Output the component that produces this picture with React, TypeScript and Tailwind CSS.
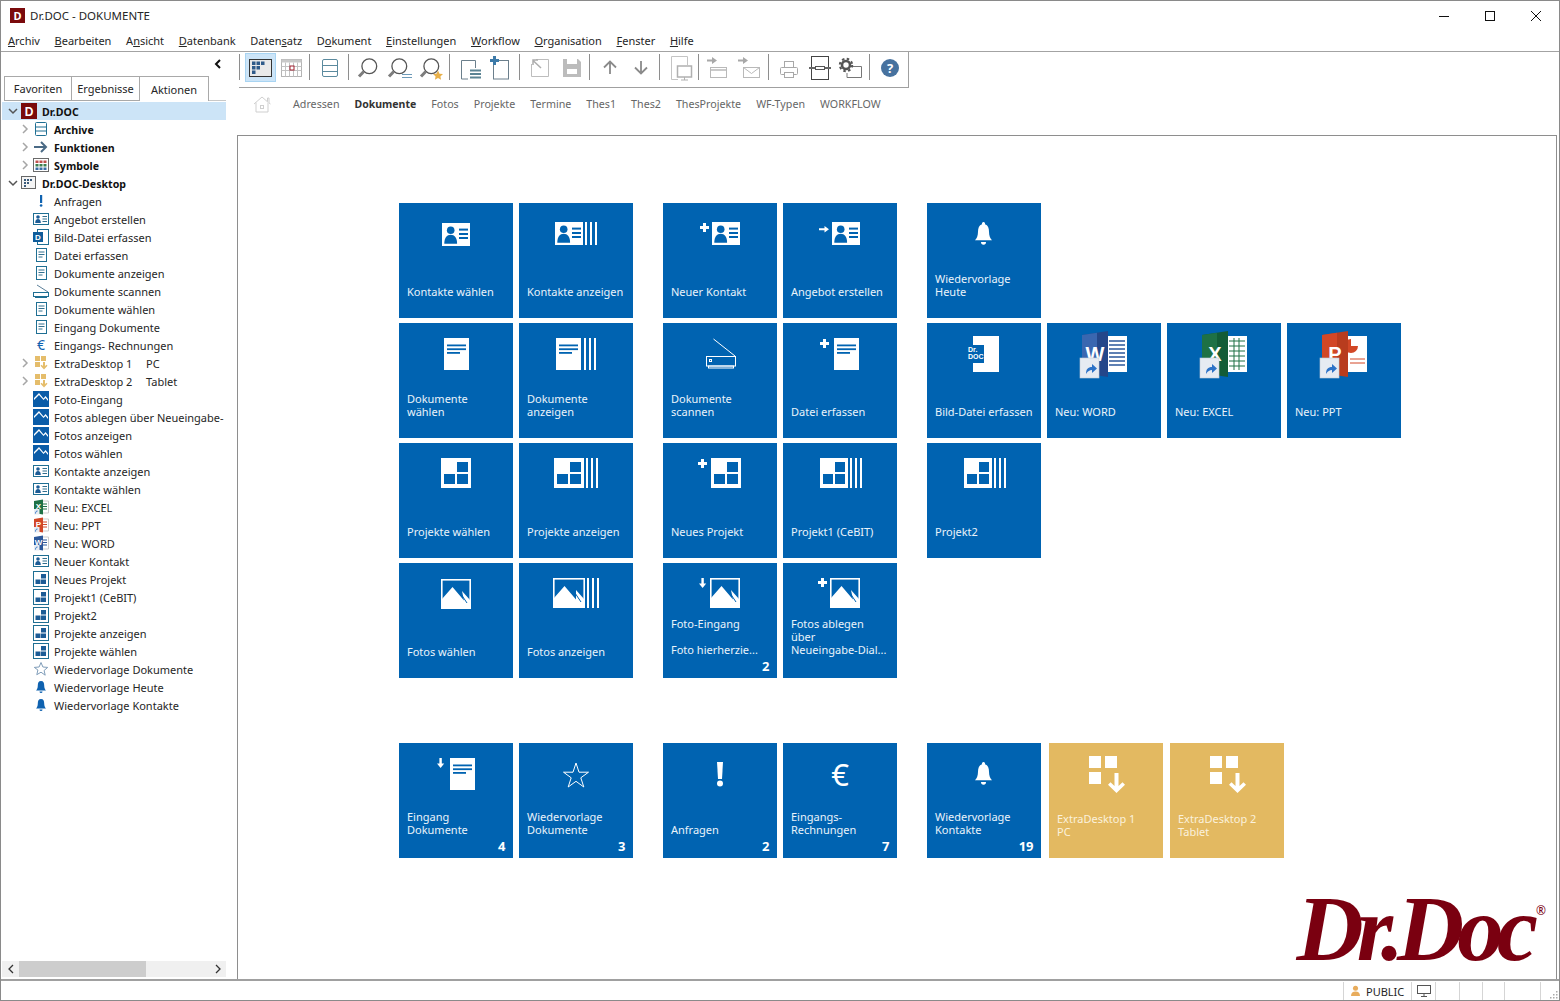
import React from "react";

const B = "#0063b1";
type XY = { x: number; y: number };

const Card = ({ x, y }: XY) => (
  <g transform={`translate(${x},${y})`}>
    <rect width="28" height="23" fill="#fff" />
    <circle cx="8.7" cy="7.3" r="3.8" fill={B} />
    <path d="M2.3 20.7c0-6 2.6-9 6.4-9s6.4 3 6.4 9z" fill={B} />
    <rect x="17" y="5.6" width="9" height="2" fill={B} />
    <rect x="17" y="10" width="9" height="2" fill={B} />
    <rect x="17" y="14" width="9" height="2" fill={B} />
  </g>
);
const Doc = ({ x, y }: XY) => (
  <g transform={`translate(${x},${y})`}>
    <rect width="25" height="32" fill="#fff" />
    <rect x="3" y="6.5" width="19" height="1.8" fill={B} />
    <rect x="3" y="10.3" width="19" height="1.8" fill={B} />
    <rect x="3" y="14" width="13" height="1.8" fill={B} />
  </g>
);
const Proj = ({ x, y, w = 30 }: XY & { w?: number }) => {
  const cw = (w - 8) / 2;
  return (
    <g transform={`translate(${x},${y})`}>
      <rect width={w} height="30" fill="#fff" />
      <rect x={5 + cw} y="4" width={cw} height="10" fill={B} />
      <rect x="3" y="16" width={cw} height="10" fill={B} />
      <rect x={5 + cw} y="16" width={cw} height="10" fill={B} />
    </g>
  );
};
const Photo = ({ x, y, w = 30 }: XY & { w?: number }) => (
  <g transform={`translate(${x},${y})`}>
    <rect x="0.8" y="0.8" width={w - 1.6} height="28.4" fill={B} stroke="#fff" strokeWidth="1.6" />
    <path d={`M1 20L11.5 8L23 21.5L${w - 9} 12L${w - 1} 21V29H1z`} fill="#fff" />
    <path d={`M${w - 11} 13.5L${w - 4} 24`} stroke={B} strokeWidth="1" />
  </g>
);
const Stripes = ({ x, y, h }: XY & { h: number }) => (
  <g fill="#fff">
    <rect x={x} y={y} width="2" height={h} />
    <rect x={x + 5} y={y} width="2" height={h} />
    <rect x={x + 10} y={y} width="2" height={h} />
  </g>
);
const Plus = ({ x, y }: XY) => (
  <path transform={`translate(${x},${y})`} d="M3 0h3v3h3v3H6v3H3V6H0V3h3z" fill="#fff" />
);
const DownA = ({ x, y }: XY) => (
  <path transform={`translate(${x},${y})`} d="M2.4 0h2.4v5.5H7.2L3.6 10 0 5.5h2.4z" fill="#fff" />
);
const RightA = ({ x, y }: XY) => (
  <path transform={`translate(${x},${y})`} d="M0 2.3h5.5V0L10 3.3 5.5 6.6V4.3H0z" fill="#fff" />
);
const Bell = ({ x, y }: XY) => (
  <g transform={`translate(${x},${y}) scale(1,1.08)`} fill="#fff">
    <path d="M8.5 0a1.5 1.5 0 0 1 1.5 2c3 1 4 3.5 4 7 0 4 1.300 6 3 8H0c1.700-2 3-4 3-8 0-3.500 1-6 4-7a1.500 1.500 0 0 1 1.500-2z" />
    <path d="M6 18.500h5a2.500 2.500 0 0 1-5 0z" />
  </g>
);
const Shortcut = ({ x, y }: XY) => (
  <g transform={`translate(${x},${y})`}>
    <rect width="19" height="20" fill="#e6ebf2" stroke="#c2cbd6" strokeWidth="0.6" />
    <path d="M6 16c0-5 2-7 6-7V6l5 4.500-5 4.500v-3c-2.500 0-4 1-6 4z" fill="#2c72c7" />
  </g>
);
const OfficeBig = ({ l, c, c2, page }: { l: string; c: string; c2: string; page: React.ReactNode }) => (
  <g>
    <rect x="60" y="13" width="20" height="36" fill="#fff" />
    {page}
    <path d="M35 12L61 8V54L35 50z" fill={c} />
    <path d="M35 12L50 9.800V52L35 50z" fill={c2} />
    <text x="48" y="38" textAnchor="middle" fontSize="20" fontWeight="700" fill="#fff" fontFamily="'Liberation Sans',sans-serif">{l}</text>
    <Shortcut x={33} y={35} />
  </g>
);
const Extra = () => (
  <g fill="#fff">
    <rect x="40" y="13" width="12" height="12" />
    <rect x="56" y="13" width="12" height="12" />
    <rect x="40" y="29" width="12" height="12" />
    <path d="M65.500 30h4v13l4-3.800 2.500 2.500L67.500 50 59 41.700l2.500-2.500 4 3.800z" />
  </g>
);

type TileP = {
  lines: string[];
  low?: boolean;
  gold?: boolean;
  count?: string;
  icon?: React.ReactNode;
  className?: string;
};
const Tile = ({ lines, low, gold, count, icon, className = "" }: TileP) => (
  <div
    className={`relative flex h-[115px] w-[114px] shrink-0 flex-col ${gold ? "bg-[#e3b961] text-[#fbf1dc]" : "bg-[#0063b1] text-[#eaf3fb]"} ${className}`}
  >
    <svg width="114" height="50" viewBox="0 0 114 50" className="block shrink-0 overflow-visible">
      {icon}
    </svg>
    <div className={`mt-auto pl-[8px] text-[11px] leading-[13px] whitespace-nowrap ${low ? "pb-[22.500px]" : "pb-[20.500px]"}`}>
      {lines.map((t, i) => (
        <div key={i}>{t || "\u00a0"}</div>
      ))}
    </div>
    {count && (
      <span className="absolute right-[7.500px] bottom-[5px] text-[13px] leading-[14px] font-bold text-white">{count}</span>
    )}
  </div>
);

/* Tree icons */
const S = ({ children }: { children: React.ReactNode }) => (
  <svg width="16" height="16" viewBox="0 0 16 16" className="shrink-0">
    {children}
  </svg>
);
const T1 = "#1f6f93";
const ICard = () => (
  <S>
    <rect x="0.500" y="2.500" width="15" height="11" fill="#fff" stroke={T1} />
    <circle cx="5" cy="6" r="1.800" fill="#1c5c96" />
    <path d="M2.200 12c0-3 1.200-4 2.800-4s2.800 1 2.800 4z" fill="#1c5c96" />
    <path d="M9.500 5.500h4.500M9.500 8h4.500M9.500 10.500h4.500" stroke="#33708f" />
  </S>
);
const IDoc = () => (
  <S>
    <rect x="3.500" y="1.500" width="10" height="13" fill="#fff" stroke={T1} />
    <path d="M5.500 5h6M5.500 7.500h6M5.500 10h4" stroke="#33708f" />
  </S>
);
const IProj = () => (
  <S>
    <rect x="0.500" y="0.500" width="15" height="15" fill="#fff" stroke={T1} />
    <rect x="8" y="3" width="5" height="4.500" fill="#1c5c96" />
    <rect x="2.500" y="8.500" width="5" height="4.500" fill="#1c5c96" />
    <rect x="8" y="8.500" width="5" height="4.500" fill="#1c5c96" />
  </S>
);
const IPhoto = () => (
  <S>
    <rect width="16" height="16" fill="#0a5ca8" />
    <path d="M1 9l5-5 4.500 5 2-2L15 10v-2L12.500 5 10.500 7.500 6 2 1 7z" fill="#fff" />
  </S>
);
const IBell = () => (
  <S>
    <path d="M8 2c2.500 0 3.200 2 3.200 4.500 0 2.500.8 4 1.800 5H3c1-1 1.800-2.500 1.800-5C4.800 4 5.500 2 8 2z" fill="#0f62b0" />
    <path d="M6.500 12.500h3a1.500 1.500 0 0 1-3 0z" fill="#0f62b0" />
  </S>
);
const IExtra = () => (
  <S>
    <rect x="2" y="1" width="5" height="5" fill="#e5bd6b" />
    <rect x="8" y="1" width="5" height="5" fill="#e5bd6b" />
    <rect x="2" y="7" width="5" height="5" fill="#e5bd6b" />
    <path d="M10 7h2v4l1.500-1.300 1 1L11 14.500l-3.500-3.800 1-1L10 11z" fill="#e5bd6b" />
  </S>
);
const IOffice = ({ c, l }: { c: string; l: string }) => (
  <S>
    <rect x="8" y="2" width="7.500" height="12" fill="#fff" stroke="#9a9a9a" strokeWidth="0.500" />
    <path d="M10 5h4M10 7.500h4M10 10h4" stroke={c} />
    <path d="M1 2l9-1.500v15L1 14z" fill={c} />
    <text x="5.500" y="10" textAnchor="middle" fontSize="8" fontWeight="700" fill="#fff" fontFamily="'Liberation Sans',sans-serif">{l}</text>
    <rect x="1" y="10" width="5.500" height="5.500" fill="#e8edf3" />
    <path d="M2.500 14.500c0-2 1-2.500 2-2.500" stroke="#2c72c7" fill="none" />
  </S>
);

const Chev = ({ open }: { open?: boolean }) =>
  open ? (
    <svg width="10" height="10" viewBox="0 0 10 10" className="block">
      <path d="M1 3l4 4 4-4" fill="none" stroke="#555" strokeWidth="1.500" />
    </svg>
  ) : (
    <svg width="10" height="10" viewBox="0 0 10 10" className="block">
      <path d="M3 1l4 4-4 4" fill="none" stroke="#a6a6a6" strokeWidth="1.500" />
    </svg>
  );

type RowP = {
  top?: boolean;
  open?: boolean;
  closed?: boolean;
  icon: React.ReactNode;
  label: string;
  bold?: boolean;
  sel?: boolean;
  extra?: string;
};
const Row = ({ top, open, closed, icon, label, bold, sel, extra }: RowP) => (
  <div className={`flex h-[18px] w-[224px] items-center overflow-hidden ${sel ? "bg-[#cce4f7]" : ""}`}>
    <span className={`flex h-full shrink-0 items-center ${top ? "w-[19px] pl-[6px]" : "w-[31px] pl-[18px]"}`}>
      {open && <Chev open />}
      {closed && <Chev />}
    </span>
    {icon}
    <span className={`ml-[5px] whitespace-nowrap ${bold ? "pt-[2px] text-[10.600px] font-bold text-[#111]" : ""} ${extra ? "w-[92px] shrink-0" : ""}`}>{label}</span>
    {extra && <span>{extra}</span>}
  </div>
);

const Tool = ({ w, className = "", children }: { w: number; className?: string; children: React.ReactNode }) => (
  <svg width={w} height="34" viewBox={`0 0 ${w} 34`} className={`block shrink-0 overflow-visible ${className}`}>
    {children}
  </svg>
);
const Sep = ({ className = "" }: { className?: string }) => (
  <div className={`mt-[1px] h-[26px] w-px shrink-0 self-start bg-[#8e8e8e] ${className}`} />
);
const Mag = () => (
  <g>
    <circle cx="11.300" cy="13.300" r="7.400" fill="none" stroke="#555" strokeWidth="1.300" />
    <path d="M5.800 18.500L1 23.500" stroke="#7d7d7d" strokeWidth="3" />
  </g>
);

const menus: [string, string, string][] = [
  ["", "A", "rchiv"],
  ["", "B", "earbeiten"],
  ["A", "n", "sicht"],
  ["", "D", "atenbank"],
  ["Daten", "s", "atz"],
  ["D", "o", "kument"],
  ["", "E", "instellungen"],
  ["", "W", "orkflow"],
  ["", "O", "rganisation"],
  ["", "F", "enster"],
  ["", "H", "ilfe"],
];

export default function App() {
  return (
    <div className="flex h-[1001px] w-[1560px] flex-col overflow-hidden border border-[#8a8a8a] bg-white text-[11px] leading-[13px] text-[#262626] [font-family:'Noto_Sans','Open_Sans',sans-serif]">
      {/* Title */}
      <div className="flex h-[29px] shrink-0 items-center">
        <div className="ml-[9px] flex h-[15px] w-[15px] items-center justify-center bg-[#7a0a0c] text-[11px] font-bold text-white">D</div>
        <span className="ml-[5px] text-[11.500px]">Dr.DOC - DOKUMENTE</span>
        <div className="ml-auto flex h-full">
          <div className="flex w-[46px] items-center justify-center">
            <svg width="12" height="12"><path d="M1 6.500h10" stroke="#111" /></svg>
          </div>
          <div className="flex w-[46px] items-center justify-center">
            <svg width="12" height="12"><rect x="1.500" y="1.500" width="9" height="9" fill="none" stroke="#111" /></svg>
          </div>
          <div className="flex w-[46px] items-center justify-center">
            <svg width="12" height="12"><path d="M1 1l10 10M11 1L1 11" stroke="#111" /></svg>
          </div>
        </div>
      </div>
      {/* Menu */}
      <div className="flex h-[22px] shrink-0 items-center gap-[14.700px] border-b border-[#a3a3a3] pl-[7px] text-[11px]">
        {menus.map(([a, k, c]) => (
          <span key={a + k + c}>
            {a}
            <span className="underline">{k}</span>
            {c}
          </span>
        ))}
      </div>
      {/* Body */}
      <div className="flex min-h-0 flex-1">
        <aside className="flex w-[236px] shrink-0 flex-col">
          <div className="flex h-[24px] shrink-0 items-center justify-end pr-[15px]">
            <svg width="8" height="10" viewBox="0 0 8 10">
              <path d="M6 1L2 5l4 4" fill="none" stroke="#111" strokeWidth="2" />
            </svg>
          </div>
          <div className="ml-[3px] flex h-[25px] w-[222px] shrink-0 border-b border-[#c8c8c8]">
            <div className="flex h-[25px] w-[68px] items-center justify-center border border-[#a9a9a9]">Favoriten</div>
            <div className="flex h-[25px] w-[68px] items-center justify-center border-y border-r border-[#a9a9a9]">Ergebnisse</div>
            <div className="flex h-[25px] w-[69px] items-center justify-center border-r border-t border-[#a9a9a9] bg-white">Aktionen</div>
          </div>
          <div className="mt-[1px] ml-[1px] min-h-0 flex-1">
            <Row top open sel bold label="Dr.DOC" icon={
              <S><rect width="16" height="16" fill="#7a0a0c" /><text x="8" y="12.500" textAnchor="middle" fontSize="12" fontWeight="700" fill="#fff" fontFamily="'Liberation Sans',sans-serif">D</text></S>
            } />
            <Row closed bold label="Archive" icon={<S><rect x="2.500" y="1.500" width="11" height="13" rx="1" fill="none" stroke={T1} /><path d="M2.500 6h11M2.500 10h11" stroke={T1} /></S>} />
            <Row closed bold label="Funktionen" icon={<S><path d="M1 8h12M8 3l5 5-5 5" fill="none" stroke="#4a6a85" strokeWidth="2" /></S>} />
            <Row closed bold label="Symbole" icon={
              <S>
                <rect x="0.500" y="1.500" width="15" height="13" fill="#fff" stroke="#6a6a6a" />
                {[2.5, 6.5, 10.5].map((x, i) => [3.5, 7, 10.5].map((y, j) => (
                  <rect key={`${i}${j}`} x={x} y={y} width="3" height="2.500" fill={j === 0 ? "#c0504d" : j === 1 ? "#3f7f4f" : "#3a6ea5"} />
                )))}
              </S>
            } />
            <Row top open bold label="Dr.DOC-Desktop" icon={
              <S>
                <rect x="0.500" y="1.500" width="14" height="12" fill="#f4f4f4" stroke="#666" />
                <path d="M3 4h2v2H3zM6 4h2v2H6zM9 4h2v2H9zM3 7h2v2H3zM6 7h2v2H6zM3 10h2v2H3z" fill="#3a5a7a" />
              </S>
            } />
            <Row label="Anfragen" icon={<S><rect x="7" y="2" width="2.200" height="8" fill="#0f62b0" /><circle cx="8.100" cy="12.500" r="1.300" fill="#0f62b0" /></S>} />
            <Row label="Angebot erstellen" icon={<ICard />} />
            <Row label="Bild-Datei erfassen" icon={
              <S>
                <rect x="4.500" y="0.500" width="11" height="15" fill="#fff" stroke={T1} />
                <rect x="0" y="3" width="10" height="10" fill="#0f5c9a" />
                <text x="5" y="11" textAnchor="middle" fontSize="8" fontWeight="700" fill="#fff" fontFamily="'Liberation Sans',sans-serif">D</text>
              </S>
            } />
            <Row label="Datei erfassen" icon={<IDoc />} />
            <Row label="Dokumente anzeigen" icon={<IDoc />} />
            <Row label="Dokumente scannen" icon={
              <S>
                <path d="M4 2l11 7" stroke="#5b7f99" fill="none" />
                <rect x="0.500" y="9.500" width="15" height="4" fill="#fff" stroke={T1} />
                <path d="M2 14.500h12" stroke={T1} />
              </S>
            } />
            <Row label="Dokumente wählen" icon={<IDoc />} />
            <Row label="Eingang Dokumente" icon={<IDoc />} />
            <Row label="Eingangs- Rechnungen" icon={<span className="flex h-4 w-4 shrink-0 items-center justify-center text-[14px] leading-4 text-[#0f62b0]">€</span>} />
            <Row closed label="ExtraDesktop 1" extra="PC" icon={<IExtra />} />
            <Row closed label="ExtraDesktop 2" extra="Tablet" icon={<IExtra />} />
            <Row label="Foto-Eingang" icon={<IPhoto />} />
            <Row label="Fotos ablegen über Neueingabe-" icon={<IPhoto />} />
            <Row label="Fotos anzeigen" icon={<IPhoto />} />
            <Row label="Fotos wählen" icon={<IPhoto />} />
            <Row label="Kontakte anzeigen" icon={<ICard />} />
            <Row label="Kontakte wählen" icon={<ICard />} />
            <Row label="Neu: EXCEL" icon={<IOffice c="#1e7145" l="X" />} />
            <Row label="Neu: PPT" icon={<IOffice c="#d24726" l="P" />} />
            <Row label="Neu: WORD" icon={<IOffice c="#2b579a" l="W" />} />
            <Row label="Neuer Kontakt" icon={<ICard />} />
            <Row label="Neues Projekt" icon={<IProj />} />
            <Row label="Projekt1 (CeBIT)" icon={<IProj />} />
            <Row label="Projekt2" icon={<IProj />} />
            <Row label="Projekte anzeigen" icon={<IProj />} />
            <Row label="Projekte wählen" icon={<IProj />} />
            <Row label="Wiedervorlage Dokumente" icon={<S><path d="M8 1.500l1.900 4.500 4.800.4-3.600 3.100 1.100 4.700L8 11.200l-4.200 2.500 1.100-4.700L1.300 6.400 6.100 6z" fill="none" stroke="#7f9db9" /></S>} />
            <Row label="Wiedervorlage Heute" icon={<IBell />} />
            <Row label="Wiedervorlage Kontakte" icon={<IBell />} />
          </div>
          <div className="mb-[2px] ml-[1px] flex h-[16px] w-[224px] shrink-0 items-center bg-[#f0f0f0]">
            <span className="flex w-[17px] justify-center">
              <svg width="8" height="10" viewBox="0 0 8 10"><path d="M6 1L2 5l4 4" fill="none" stroke="#333" strokeWidth="1.300" /></svg>
            </span>
            <div className="h-full w-[127px] bg-[#cdcdcd]" />
            <span className="ml-auto flex w-[17px] justify-center">
              <svg width="8" height="10" viewBox="0 0 8 10"><path d="M2 1l4 4-4 4" fill="none" stroke="#333" strokeWidth="1.300" /></svg>
            </span>
          </div>
        </aside>

        <main className="flex min-w-0 flex-1 flex-col pr-[2px]">
          {/* Toolbar */}
          <div className="ml-[2px] flex h-[36px] w-[670px] shrink-0 items-start border-r border-b border-[#a0a0a0] pt-px">
            <Sep />
            <div className="ml-[5px] h-[29px] w-[31px] shrink-0 border border-[#a8d4f2] bg-[#cce4f7] pt-[0px]">
              <svg width="29" height="27" viewBox="0 0 29 27" className="block">
                <rect x="3.500" y="5.500" width="22" height="17" fill="#e9e9e9" stroke="#333" />
                <path d="M6 7.500h3.500V11H6zM10.500 7.500H14V11h-3.500zM15 7.500h3.500V11H15zM6 12h3.500v3.500H6zM10.500 12H14v3.500h-3.500zM6 16.500h3.500V20H6z" fill="#2f5b8a" />
              </svg>
            </div>
            <Tool w={21} className="ml-[5px]">
              <rect x="0.500" y="6.500" width="20" height="17" fill="#fff" stroke="#b4b4b4" />
              <rect x="0.500" y="6.500" width="20" height="3" fill="#c9c9c9" />
              <path d="M4.500 9.500v14M8.500 9.500v14M12.500 9.500v14M16.500 9.500v14M.5 13.500h20M.5 17.500h20" stroke="#c2c2c2" />
              <rect x="9" y="13" width="4" height="4" fill="#fff" stroke="#a02030" />
            </Tool>
            <Sep className="ml-[7px]" />
            <Tool w={16} className="ml-[12px]">
              <rect x="0.500" y="6.500" width="15" height="17" rx="1.500" fill="none" stroke="#5b8a9e" />
              <path d="M.5 12.500h15M.5 18.500h15" stroke="#5b8a9e" />
            </Tool>
            <Sep className="ml-[10px]" />
            <Tool w={21} className="ml-[9px]"><Mag /></Tool>
            <Tool w={25} className="ml-[9px]">
              <Mag />
              <path d="M14 21.500h10M14 24.500h10" stroke="#6d9ab8" />
            </Tool>
            <Tool w={23} className="ml-[7px]">
              <Mag />
              <path d="M18 17.500l1.500 3.200 3.500.4-2.600 2.300.7 3.400-3.100-1.700-3.100 1.700.7-3.400-2.600-2.300 3.500-.4z" fill="#e8b04a" />
            </Tool>
            <Sep className="ml-[6px]" />
            <Tool w={20} className="ml-[11px]">
              <path d="M7 26H.5V7.500h14V15" fill="none" stroke="#6b7f8c" />
              <path d="M9 17.500h11M9 21h11M9 24.500h11" stroke="#5b8494" strokeWidth="1.800" />
            </Tool>
            <Tool w={19} className="ml-[9px]">
              <rect x="3.500" y="7.500" width="15" height="18.500" fill="#fff" stroke="#6b7f8c" />
              <path d="M3 3h3v3h3v3H6v3H3V9H0V6h3z" fill="#3d7aa8" />
            </Tool>
            <Sep className="ml-[10px]" />
            <Tool w={18} className="ml-[11px]">
              <path d="M5 6.500h12.500v17H.5V11" fill="none" stroke="#bdbdbd" />
              <path d="M10 15L2 7.500M2 12V7h5" fill="none" stroke="#adadad" strokeWidth="1.500" />
            </Tool>
            <Tool w={18} className="ml-[14px]">
              <path d="M0 6h15l3 3v15H0z" fill="#bcbcbc" />
              <rect x="4" y="6" width="10" height="5" fill="#fff" />
              <rect x="4" y="16" width="10" height="5" fill="#fff" />
            </Tool>
            <Sep className="ml-[8px]" />
            <Tool w={14} className="ml-[13px]">
              <path d="M7 21V9M1 14.500L7 8.500l6 6" fill="none" stroke="#8a8a8a" strokeWidth="1.800" />
            </Tool>
            <Tool w={14} className="ml-[17px]">
              <path d="M7 8v12M1 14.500L7 20.500l6-6" fill="none" stroke="#8a8a8a" strokeWidth="1.800" />
            </Tool>
            <Sep className="ml-[11px]" />
            <Tool w={21} className="ml-[11px]">
              <path d="M16.500 12V3.500H.5v23H7" fill="none" stroke="#c4c4c4" />
              <rect x="6.500" y="13" width="14" height="11" fill="#fff" stroke="#b0b0b0" strokeWidth="1.500" />
              <path d="M10 27h7M13.500 24v3" stroke="#b0b0b0" />
            </Tool>
            <Sep className="ml-[6px]" />
            <Tool w={20} className="ml-[8px]">
              <path d="M0 6.500h5V4l5 3.500L5 11V8.500H0z" fill="#a8a8a8" />
              <rect x="3.500" y="14.500" width="16" height="10" fill="#fff" stroke="#b9b9b9" />
              <path d="M3.500 17h16" stroke="#b9b9b9" strokeWidth="1.500" />
            </Tool>
            <Tool w={22} className="ml-[11px]">
              <path d="M0 6.500h5V4l5 3.500L5 11V8.500H0z" fill="#a8a8a8" />
              <rect x="5.500" y="14.500" width="16" height="10" fill="#fff" stroke="#b9b9b9" />
              <path d="M5.500 14.500l8 6 8-6" fill="none" stroke="#b9b9b9" />
            </Tool>
            <Sep className="ml-[8px]" />
            <Tool w={18} className="ml-[11px]">
              <rect x="4.500" y="8.500" width="9" height="6" fill="#fff" stroke="#a8a8a8" />
              <rect x="0.500" y="14.500" width="17" height="7" rx="1" fill="#fff" stroke="#a8a8a8" />
              <rect x="4.500" y="19.500" width="9" height="5" fill="#fff" stroke="#a8a8a8" />
            </Tool>
            <Tool w={22} className="ml-[11px]">
              <rect x="2.500" y="3.500" width="17" height="23" fill="#fff" stroke="#444" />
              <path d="M0 15h6.500M15.500 15H22" stroke="#666" strokeWidth="2" />
              <rect x="6.500" y="13.500" width="9" height="3" fill="#fff" stroke="#555" />
            </Tool>
            <Tool w={23} className="ml-[8px]">
              <path d="M14 13.500h8.500v11H8V20" fill="none" stroke="#777" />
              <circle cx="7" cy="12" r="4" fill="none" stroke="#555" strokeWidth="2.600" />
              <circle cx="7" cy="12" r="6.200" fill="none" stroke="#555" strokeWidth="2" strokeDasharray="2.500 2.370" />
            </Tool>
            <Sep className="ml-[7px]" />
            <div className="ml-[11px] mt-[6px] flex h-[18px] w-[18px] shrink-0 items-center justify-center rounded-full bg-[#47729f] text-[13px] font-bold leading-none text-white">?</div>
          </div>
          {/* Nav */}
          <div className="flex h-[32px] shrink-0 items-center">
            <svg width="18" height="17" viewBox="0 0 18 17" className="ml-[16px] shrink-0">
              <path d="M1 8L9 1l5.500 4.800V2h1.500v5l1.500 1M3 6.500V16h12V6.500" fill="none" stroke="#cfcfcf" />
              <rect x="7.500" y="9.500" width="3" height="3" fill="none" stroke="#cfcfcf" />
            </svg>
            <div className="ml-[22px] flex items-center gap-[15px] text-[10.700px] text-[#666]">
              <span>Adressen</span>
              <span className="text-[10.500px] font-bold text-[#333]">Dokumente</span>
              <span>Fotos</span>
              <span>Projekte</span>
              <span>Termine</span>
              <span>Thes1</span>
              <span>Thes2</span>
              <span>ThesProjekte</span>
              <span>WF-Typen</span>
              <span>WORKFLOW</span>
            </div>
          </div>
          <div className="h-[15px] shrink-0" />
          {/* Panel */}
          <div className="relative min-h-0 flex-1 border-t border-r border-l border-[#8e8e8e] pt-[67px] pl-[161px]">
            <div className="flex flex-col gap-[5px]">
              <div className="flex gap-[6px]">
                <Tile lines={["Kontakte wählen"]} icon={<Card x={43} y={20} />} />
                <Tile lines={["Kontakte anzeigen"]} icon={<><Card x={36} y={19} /><Stripes x={66} y={19} h={23} /></>} />
                <Tile className="ml-[24px]" lines={["Neuer Kontakt"]} icon={<><Card x={49} y={19} /><Plus x={37} y={20} /></>} />
                <Tile lines={["Angebot erstellen"]} icon={<><Card x={49} y={19} /><RightA x={36} y={23} /></>} />
                <Tile className="ml-[24px]" lines={["Wiedervorlage", "Heute"]} icon={<Bell x={48} y={19} />} />
              </div>
              <div className="flex gap-[6px]">
                <Tile lines={["Dokumente", "wählen"]} icon={<Doc x={45} y={15} />} />
                <Tile lines={["Dokumente", "anzeigen"]} icon={<><Doc x={37} y={15} /><Stripes x={65} y={15} h={32} /></>} />
                <Tile className="ml-[24px]" lines={["Dokumente", "scannen"]} icon={
                  <g fill="none" stroke="#fff">
                    <path d="M50.500 16L72 33" />
                    <rect x="43.500" y="33.500" width="29" height="9.500" />
                    <rect x="45.500" y="43" width="25" height="2" />
                    <rect x="46.500" y="36.500" width="2" height="2" />
                  </g>
                } />
                <Tile lines={["Datei erfassen"]} icon={<><Doc x={51} y={15} /><Plus x={37} y={16} /></>} />
                <Tile className="ml-[24px]" lines={["Bild-Datei erfassen"]} icon={
                  <g>
                    <rect x="46" y="13" width="26" height="36" fill="#fff" />
                    <rect x="46" y="22" width="11" height="18" fill={B} />
                    <text x="41" y="29" fontSize="7" fontWeight="700" fill="#fff" fontFamily="'Liberation Sans',sans-serif">Dr.</text>
                    <text x="41" y="36" fontSize="7" fontWeight="700" fill="#fff" fontFamily="'Liberation Sans',sans-serif">DOC</text>
                  </g>
                } />
                <Tile lines={["Neu: WORD"]} icon={
                  <OfficeBig l="W" c="#24478a" c2="#3a67b0" page={<path d="M62 18h16M62 22h16M62 26h16M62 30h16M62 34h16M62 38h16M62 42h16" stroke="#2b579a" strokeWidth="1.500" />} />
                } />
                <Tile lines={["Neu: EXCEL"]} icon={
                  <OfficeBig l="X" c="#125c36" c2="#1e7145" page={<path d="M62 18h16M62 23h16M62 28h16M62 33h16M62 38h16M62 43h16M67 15v32M72 15v32" stroke="#1e7145" />} />
                } />
                <Tile lines={["Neu: PPT"]} icon={
                  <OfficeBig l="P" c="#b83c1e" c2="#d24726" page={<g><path d="M64 16a7 7 0 1 0 7 7h-7z" fill="#d24726" /><path d="M63 36h15M63 40h15" stroke="#d24726" /></g>} />
                } />
              </div>
              <div className="flex gap-[6px]">
                <Tile lines={["Projekte wählen"]} icon={<Proj x={42} y={15} />} />
                <Tile lines={["Projekte anzeigen"]} icon={<><Proj x={35} y={15} /><Stripes x={67} y={15} h={30} /></>} />
                <Tile className="ml-[24px]" lines={["Neues Projekt"]} icon={<><Proj x={48} y={15} /><Plus x={35} y={16} /></>} />
                <Tile lines={["Projekt1 (CeBIT)"]} icon={<><Proj x={37} y={15} w={28} /><Stripes x={67} y={15} h={30} /></>} />
                <Tile className="ml-[24px]" lines={["Projekt2"]} icon={<><Proj x={37} y={15} w={28} /><Stripes x={67} y={15} h={30} /></>} />
              </div>
              <div className="flex gap-[6px]">
                <Tile lines={["Fotos wählen"]} icon={<Photo x={42} y={16} />} />
                <Tile lines={["Fotos anzeigen"]} icon={<><Photo x={34} y={15} w={32} /><Stripes x={68} y={15} h={30} /></>} />
                <Tile className="ml-[24px]" low count="2" lines={["Foto-Eingang", "", "Foto hierherzie..."]} icon={<><Photo x={47} y={15} /><DownA x={36} y={15} /></>} />
                <Tile low lines={["Fotos ablegen", "über", "Neueingabe-Dial..."]} icon={<><Photo x={47} y={15} /><Plus x={35} y={15} /></>} />
              </div>
              <div className="mt-[60px] flex gap-[6px]">
                <Tile low count="4" lines={["Eingang", "Dokumente"]} icon={<><Doc x={51} y={15} /><DownA x={38} y={15} /></>} />
                <Tile low count="3" lines={["Wiedervorlage", "Dokumente"]} icon={
                  <path d="M57 20l3 9.200h9.500l-7.700 5.600 3 9.200-7.800-5.700L49.200 44l3-9.200-7.700-5.600H54z" fill="none" stroke="#fff" strokeWidth="1" />
                } />
                <Tile className="ml-[24px]" low count="2" lines={["Anfragen"]} icon={
                  <g fill="#fff"><path d="M54 19h6l-1 17h-4z" /><circle cx="57" cy="40.500" r="3" /></g>
                } />
                <Tile low count="7" lines={["Eingangs-", "Rechnungen"]} icon={
                  <text x="57" y="43" textAnchor="middle" fontSize="31" fill="#fff" fontFamily="'Noto Sans',sans-serif">€</text>
                } />
                <Tile className="ml-[24px]" low count="19" lines={["Wiedervorlage", "Kontakte"]} icon={<Bell x={48} y={19} />} />
                <Tile className="ml-[2px]" gold lines={["ExtraDesktop 1", "PC"]} icon={<Extra />} />
                <Tile className="ml-[1px]" gold lines={["ExtraDesktop 2", "Tablet"]} icon={<Extra />} />
              </div>
            </div>
            <div className="absolute right-[25px] bottom-[0px] text-[93px] leading-[100px] font-bold tracking-[-7px] text-[#7a0010] italic [font-family:'Liberation_Serif',serif]">
              Dr.Doc
            </div>
            <div className="absolute right-[10px] bottom-[62px] text-[12px] leading-[12px] text-[#7a0010]">®</div>
          </div>
        </main>
      </div>
      {/* Status */}
      <div className="flex h-[21px] shrink-0 justify-end border-t-[2px] border-[#a0a0a0] bg-white pt-px text-[11px]">
        <div className="flex w-[68px] items-center border-l border-[#d5d5d5] pl-[7px]">
          <svg width="9" height="12" viewBox="0 0 10 12" className="shrink-0">
            <circle cx="5" cy="3" r="2.800" fill="#e8ac5c" />
            <path d="M0 11.500c0-3.500 2-5 5-5s5 1.500 5 5z" fill="#e8ac5c" />
          </svg>
          <span className="ml-[6px]">PUBLIC</span>
        </div>
        <div className="flex w-[24px] items-center justify-center border-l border-[#d5d5d5]">
          <svg width="14" height="12" viewBox="0 0 14 12">
            <rect x="0.500" y="0.500" width="13" height="8" fill="none" stroke="#555" />
            <path d="M4 11.500h6M7 9v2" stroke="#555" />
          </svg>
        </div>
        <div className="w-[24px] border-l border-[#d5d5d5]" />
        <div className="w-[23px] border-l border-[#d5d5d5]" />
        <div className="w-[22px] border-l border-[#d5d5d5]" />
        <div className="w-[36px] border-l border-[#d5d5d5]" />
        <div className="relative w-[19px] border-l border-[#d5d5d5]">
          <svg width="10" height="10" viewBox="0 0 10 10" className="absolute right-[1px] bottom-[1px]">
            <path d="M8 2h1.500v1.500H8zM5 5h1.500v1.500H5zM8 5h1.500v1.500H8zM2 8h1.500v1.500H2zM5 8h1.500v1.500H5zM8 8h1.500v1.500H8z" fill="#aaa" />
          </svg>
        </div>
      </div>
    </div>
  );
}
